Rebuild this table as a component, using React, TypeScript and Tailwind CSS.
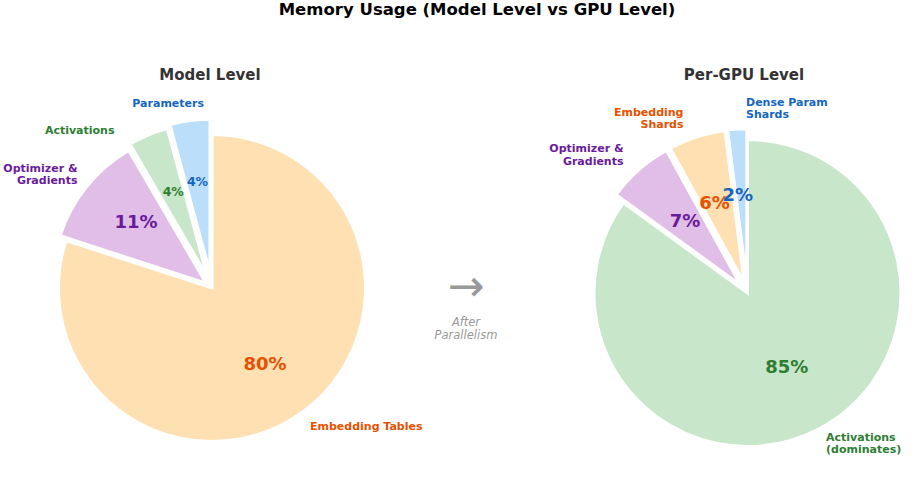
import React from 'react';

interface Slice {
  span: number;
  explode: number;
  fill: string;
}

interface Label {
  lines: string[];
  x: number;
  y: number;
  anchor: 'start' | 'end' | 'middle';
  color: string;
  size: number;
}

const R = 153.5;

function wedgePath(cx: number, cy: number, r: number, a1: number, a2: number) {
  const pt = (a: number) => {
    const t = (a * Math.PI) / 180;
    return `${(cx + r * Math.cos(t)).toFixed(2)} ${(cy - r * Math.sin(t)).toFixed(2)}`;
  };
  const large = a1 - a2 > 180 ? 1 : 0;
  return `M ${cx.toFixed(2)} ${cy.toFixed(2)} L ${pt(a1)} A ${r} ${r} 0 ${large} 1 ${pt(a2)} Z`;
}

function Pie({ cx, cy, slices, labels, width }: { cx: number; cy: number; slices: Slice[]; labels: Label[]; width: number }) {
  let angle = 90;
  const wedges = slices.map((s, i) => {
    const a1 = angle;
    const a2 = angle - s.span;
    angle = a2;
    const mid = ((a1 + a2) / 2) * (Math.PI / 180);
    const ox = cx + s.explode * R * Math.cos(mid);
    const oy = cy - s.explode * R * Math.sin(mid);
    return (
      <path
        key={i}
        d={wedgePath(ox, oy, R, a1, a2)}
        fill={s.fill}
        stroke="#ffffff"
        strokeWidth={3}
        strokeLinejoin="miter"
      />
    );
  });

  return (
    <svg width={width} height={393} className="block overflow-visible">
      {wedges}
      {labels.map((l, i) => (
        <text
          key={i}
          x={l.x}
          y={l.y}
          textAnchor={l.anchor}
          dominantBaseline="central"
          fill={l.color}
          fontSize={l.size}
          fontWeight="bold"
        >
          {l.lines.map((line, j) => (
            <tspan key={j} x={l.x} dy={j === 0 ? 0 : 12.2}>
              {line}
            </tspan>
          ))}
        </text>
      ))}
    </svg>
  );
}

const ORANGE = '#e65100';
const PURPLE = '#6a1b9a';
const GREEN = '#2e7d32';
const BLUE = '#1565c0';

const leftSlices: Slice[] = [
  { span: 288, explode: 0, fill: '#ffe0b2' },
  { span: 41.76, explode: 0.05, fill: '#e1bee7' },
  { span: 15.12, explode: 0.08, fill: '#c8e6c9' },
  { span: 15.12, explode: 0.1, fill: '#bbdefb' },
];

const leftLabels: Label[] = [
  { lines: ['Embedding Tables'], x: 310, y: 341, anchor: 'start', color: ORANGE, size: 11 },
  { lines: ['Optimizer &', 'Gradients'], x: 77.5, y: 83, anchor: 'end', color: PURPLE, size: 11 },
  { lines: ['Activations'], x: 114.5, y: 45, anchor: 'end', color: GREEN, size: 11 },
  { lines: ['Parameters'], x: 204, y: 18, anchor: 'end', color: BLUE, size: 11 },
  { lines: ['80%'], x: 265, y: 278, anchor: 'middle', color: ORANGE, size: 18 },
  { lines: ['11%'], x: 136, y: 136, anchor: 'middle', color: PURPLE, size: 18 },
  { lines: ['4%'], x: 173.3, y: 106.3, anchor: 'middle', color: GREEN, size: 12.5 },
  { lines: ['4%'], x: 197.5, y: 95.5, anchor: 'middle', color: BLUE, size: 12.5 },
];

const rightSlices: Slice[] = [
  { span: 306, explode: 0, fill: '#c8e6c9' },
  { span: 25.2, explode: 0.07, fill: '#e1bee7' },
  { span: 21.6, explode: 0.07, fill: '#ffe0b2' },
  { span: 7.2, explode: 0.07, fill: '#bbdefb' },
];

const rightLabels: Label[] = [
  { lines: ['Activations', '(dominates)'], x: 314, y: 351.7, anchor: 'start', color: GREEN, size: 11 },
  { lines: ['Optimizer &', 'Gradients'], x: 111.5, y: 63.3, anchor: 'end', color: PURPLE, size: 11 },
  { lines: ['Embedding', 'Shards'], x: 171.5, y: 27, anchor: 'end', color: ORANGE, size: 11 },
  { lines: ['Dense Param', 'Shards'], x: 234, y: 16.5, anchor: 'start', color: BLUE, size: 11 },
  { lines: ['85%'], x: 274.7, y: 281, anchor: 'middle', color: GREEN, size: 18 },
  { lines: ['7%'], x: 173, y: 135, anchor: 'middle', color: PURPLE, size: 18 },
  { lines: ['6%'], x: 202.5, y: 116.7, anchor: 'middle', color: ORANGE, size: 18 },
  { lines: ['2%'], x: 225.7, y: 109, anchor: 'middle', color: BLUE, size: 18 },
];

function App() {
  return (
    <div className="w-[916px] h-[478px] bg-white overflow-hidden font-['DejaVu_Sans',sans-serif]">
      {/* Figure title */}
      <div className="h-[20px] pl-[38px] flex justify-center">
        <h1 className="text-[16.5px] leading-[20px] font-bold text-black whitespace-nowrap">
          Memory Usage (Model Level vs GPU Level)
        </h1>
      </div>

      <div className="mt-[45px] flex">
        {/* Model level */}
        <div className="w-[420px] flex flex-col">
          <h2 className="h-[20px] text-[15px] leading-[20px] font-bold text-[#333333] text-center">Model Level</h2>
          <Pie cx={212} cy={203} slices={leftSlices} labels={leftLabels} width={420} />
        </div>

        {/* Arrow */}
        <div className="w-[92px] flex flex-col items-center pt-[209px]">
          <span className="h-[24px] text-[44px] leading-[24px] text-[#999999]">→</span>
          <p className="mt-[18px] text-[11.5px] leading-[13px] italic text-[#999999] text-center">
            After
            <br />
            Parallelism
          </p>
        </div>

        {/* Per-GPU level */}
        <div className="w-[404px] flex flex-col">
          <h2 className="h-[20px] pl-[60px] text-[15px] leading-[20px] font-bold text-[#333333] text-center">
            Per-GPU Level
          </h2>
          <Pie cx={235.5} cy={208} slices={rightSlices} labels={rightLabels} width={404} />
        </div>
      </div>
    </div>
  );
}

export default App;
